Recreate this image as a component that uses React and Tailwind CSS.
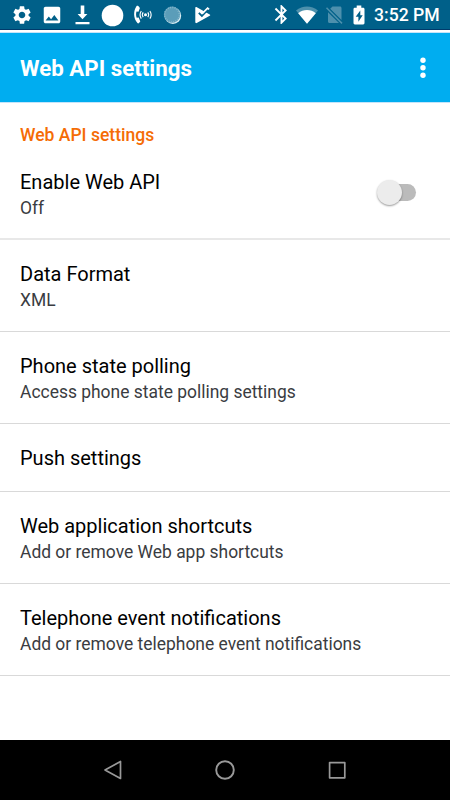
import { MdBluetooth, MdImage, MdSettings } from 'react-icons/md';

const items = [
  { title: 'Data Format', summary: 'XML' },
  { title: 'Phone state polling', summary: 'Access phone state polling settings' },
  { title: 'Push settings' },
  { title: 'Web application shortcuts', summary: 'Add or remove Web app shortcuts' },
  { title: 'Telephone event notifications', summary: 'Add or remove telephone event notifications' },
];

function Slot({ children }) {
  return <div className="w-[30px] h-full flex items-center justify-center">{children}</div>;
}

function StatusIcon({ children }) {
  return (
    <svg width="30" height="30" viewBox="0 0 30 30" fill="currentColor">
      {children}
    </svg>
  );
}

function StatusBar() {
  return (
    <div className="h-[30px] shrink-0 flex items-center pl-[7px] bg-[#006089] border-b border-[#003a6b] text-white">
      <Slot><MdSettings size={22} /></Slot>
      <Slot><MdImage size={22} /></Slot>
      <StatusIcon>
        <path d="M13.7 5.5h3.6V14h3.1l-4.9 5.2-4.9-5.2h3.1zM8.5 22h14v2.2h-14z" />
      </StatusIcon>
      <StatusIcon>
        <circle cx="15.5" cy="15.5" r="10.8" />
      </StatusIcon>
      <StatusIcon>
        <path d="M9.6 6.1c-3.4 4.8-3.4 12.3.8 17 .6.5 1.2.3 1.8-.3l1.1-1.4-1.6-3.8-2 .2c-.8-2-.8-4.2-.2-6.2l2 .1 1.4-3.8-1.6-1.8c-.6-.5-1.2-.5-1.7 0z" />
        <circle cx="18.5" cy="14.8" r="1.5" />
        <path
          d="M16.2 12.4c-1.1 1.5-1.1 3.3 0 4.8M20.8 12.4c1.1 1.5 1.1 3.3 0 4.8M14.3 11c-1.5 2.2-1.5 5.2 0 7.6M22.9 11c1.5 2.2 1.5 5.2 0 7.6"
          fill="none" stroke="currentColor" strokeWidth="1.1"
        />
      </StatusIcon>
      <StatusIcon>
        <circle cx="15.9" cy="15.7" r="8.3" fill="#d9edf3" />
        <circle cx="15" cy="14.7" r="8.1" fill="#5b9db9" />
        <circle cx="15" cy="14.7" r="7.3" fill="none" stroke="#84b6cb" strokeWidth="1.6" strokeDasharray="1 1.3" />
      </StatusIcon>
      <StatusIcon>
        <path d="M8.3 7.7c0-.7.5-1 1.1-.7l13.3 7.4c.7.4.7 1 0 1.4L9.7 23c-.7.4-1.4 0-1.4-.7z" />
        <path d="M11.8 12.8l3.1 3.2 6.3-6.6" fill="none" stroke="#006089" strokeWidth="1.8" />
        <path d="M15.2 13.6l5.4-5.5 1.5 1.3" fill="none" stroke="currentColor" strokeWidth="1.6" />
      </StatusIcon>

      <div className="ml-[51px] flex h-full items-center">
        <div className="w-[26px] flex justify-center"><MdBluetooth size={23} /></div>
        <svg width="26" height="30" viewBox="0 0 26 30" fill="currentColor">
          <path d="M2 10.5C8.5 5 17.5 5 24 10.5L13 23.7z" opacity=".3" />
          <path d="M4.2 13.2c5-4.2 12.6-4.2 17.6 0L13 23.7z" />
        </svg>
        <svg width="26" height="30" viewBox="0 0 26 30">
          <path d="M12.5 6.5H20c.8 0 1.500.7 1.500 1.500v12L10.200 8.800zM8 12.200L19 23H9.500c-.8 0-1.500-.7-1.500-1.500z" fill="#4d90ad" />
          <path d="M6.5 7.7l15.5 15.7" stroke="#4d90ad" strokeWidth="1.5" />
        </svg>
        <svg width="26" height="30" viewBox="0 0 26 30" fill="currentColor">
          <path d="M10.7 5.6h4.6v2.2h1.9c.7 0 1.3.6 1.3 1.3v14c0 .8-.6 1.400-1.300 1.400H8.800c-.7 0-1.300-.6-1.300-1.400v-14c0-.7.600-1.300 1.300-1.300h1.900z" />
          <path d="M14.3 10.5l-4.600 6.300h2.700v5l4.300-6.600h-2.400z" fill="#006089" />
        </svg>
        <span className="ml-[2px] pt-px text-[17.6px] font-medium whitespace-nowrap">3:52 PM</span>
      </div>
    </div>
  );
}

function Preference({ title, summary }) {
  return (
    <div className={`${summary ? 'h-[92px] pt-[3px]' : 'h-[68px] pt-px'} border-b border-[#d9d9d9] flex flex-col justify-center px-5`}>
      <p className="text-[20px] leading-[26px] text-black">{title}</p>
      {summary && <p className="text-[17.45px] leading-[26px] text-[#3a3c41]">{summary}</p>}
    </div>
  );
}

function NavBar() {
  return (
    <div className="h-[60px] shrink-0 bg-black flex items-center justify-center gap-[88px]">
      <svg width="24" height="24" viewBox="0 0 24 24" fill="none" stroke="#999" strokeWidth="1.7" strokeLinejoin="round">
        <path d="M19.5 3.5v17L4 12z" />
      </svg>
      <svg width="24" height="24" viewBox="0 0 24 24" fill="none" stroke="#999" strokeWidth="1.9">
        <circle cx="12" cy="12" r="8.8" />
      </svg>
      <svg width="24" height="24" viewBox="0 0 24 24" fill="none" stroke="#999" strokeWidth="1.7" strokeLinejoin="round">
        <rect x="4.6" y="4.6" width="15.2" height="15.2" />
      </svg>
    </div>
  );
}

export default function App() {
  return (
    <div className="w-[450px] h-[800px] flex flex-col overflow-hidden bg-white font-[Roboto,sans-serif]">
      <StatusBar />

      <header className="mt-[2px] h-[71px] shrink-0 bg-[#00adf0] border-y border-[#c4e4fa] flex items-center justify-between pl-5 pr-[24.5px]">
        <h1 className="text-[22.3px] leading-7 font-bold text-white">Web API settings</h1>
        <svg width="6" height="22" viewBox="0 0 6 22" fill="#fff">
          <circle cx="3" cy="3.3" r="2.7" />
          <circle cx="3" cy="10.8" r="2.7" />
          <circle cx="3" cy="18.3" r="2.7" />
        </svg>
      </header>

      <main className="flex-1">
        <h2 className="h-[53px] pt-5 px-5 text-[17.55px] leading-[25px] font-medium text-[#f56c05]">Web API settings</h2>
        <div className="h-[84px] border-b-2 border-[#e8e8e8] px-5 pt-[13px] flex justify-between">
          <div>
            <p className="text-[20px] leading-[26px] text-black">Enable Web API</p>
            <p className="text-[17.45px] leading-[26px] text-[#3a3c41]">Off</p>
          </div>
          <div className="mt-[15px] mr-[14px] w-[36px] h-[17px] rounded-full bg-[#bbb] self-start flex items-center">
            <div className="-ml-[3.5px] size-[25px] shrink-0 rounded-full bg-[#ececec] shadow-[0_1px_2px_rgba(0,0,0,0.4)]" />
          </div>
        </div>
        {items.map((item) => (
          <Preference key={item.title} {...item} />
        ))}
      </main>

      <NavBar />
    </div>
  );
}
